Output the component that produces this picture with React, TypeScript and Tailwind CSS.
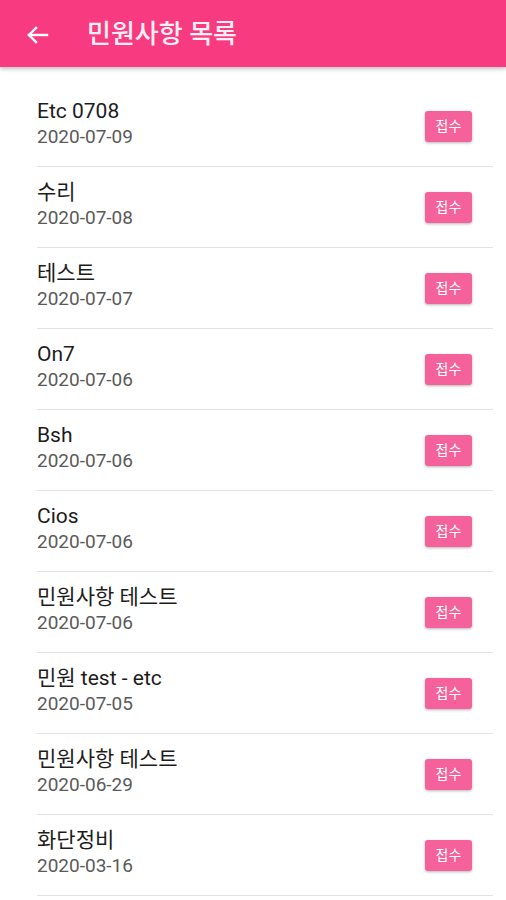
const items = [
  { title: 'Etc 0708', date: '2020-07-09' },
  { title: '수리', date: '2020-07-08' },
  { title: '테스트', date: '2020-07-07' },
  { title: 'On7', date: '2020-07-06' },
  { title: 'Bsh', date: '2020-07-06' },
  { title: 'Cios', date: '2020-07-06' },
  { title: '민원사항 테스트', date: '2020-07-06' },
  { title: '민원 test - etc', date: '2020-07-05' },
  { title: '민원사항 테스트', date: '2020-06-29' },
  { title: '화단정비', date: '2020-03-16' },
];

const App = () => {
  return (
    <div
      className="w-[506px] h-[900px] overflow-hidden bg-white"
      style={{ fontFamily: 'Roboto, "Noto Sans CJK KR", sans-serif' }}
    >
      {/* App bar */}
      <header className="relative z-10 h-[67px] bg-[#f83a80] flex items-center shadow-[0_2px_4px_rgba(0,0,0,0.25)]">
        <button className="w-[74px] h-full flex items-center pl-[26px] pt-[2px]">
          <svg width="23" height="18" viewBox="0 0 23 18" fill="none" stroke="white" strokeWidth="2.4" strokeLinecap="square">
            <path d="M3 9H21" />
            <path d="M10 2L3 9l7 7" />
          </svg>
        </button>
        <h1 className="ml-[13px] pt-[2px] text-[26px] font-medium text-[#fdf0f5]">민원사항 목록</h1>
      </header>

      {/* List */}
      <ul className="pt-[19px] pl-[37px] pr-[13px]">
        {items.map((item, i) => (
          <li key={i} className="h-[81px] border-b border-[#e2e2e2] flex items-center justify-between pr-[21px]">
            <div className="pb-1">
              <div className="text-[21px] leading-[26px] text-[#1c1c1c]">{item.title}</div>
              <div className="text-[19px] leading-[26px] text-[#5a5a5a]">{item.date}</div>
            </div>
            <button className="w-[47px] h-[31px] rounded-[3px] bg-[#f5619a] text-white text-[14px] shadow-[0_1px_3px_rgba(0,0,0,0.3)] flex items-center justify-center">
              접수
            </button>
          </li>
        ))}
      </ul>
    </div>
  );
};

export default App;
